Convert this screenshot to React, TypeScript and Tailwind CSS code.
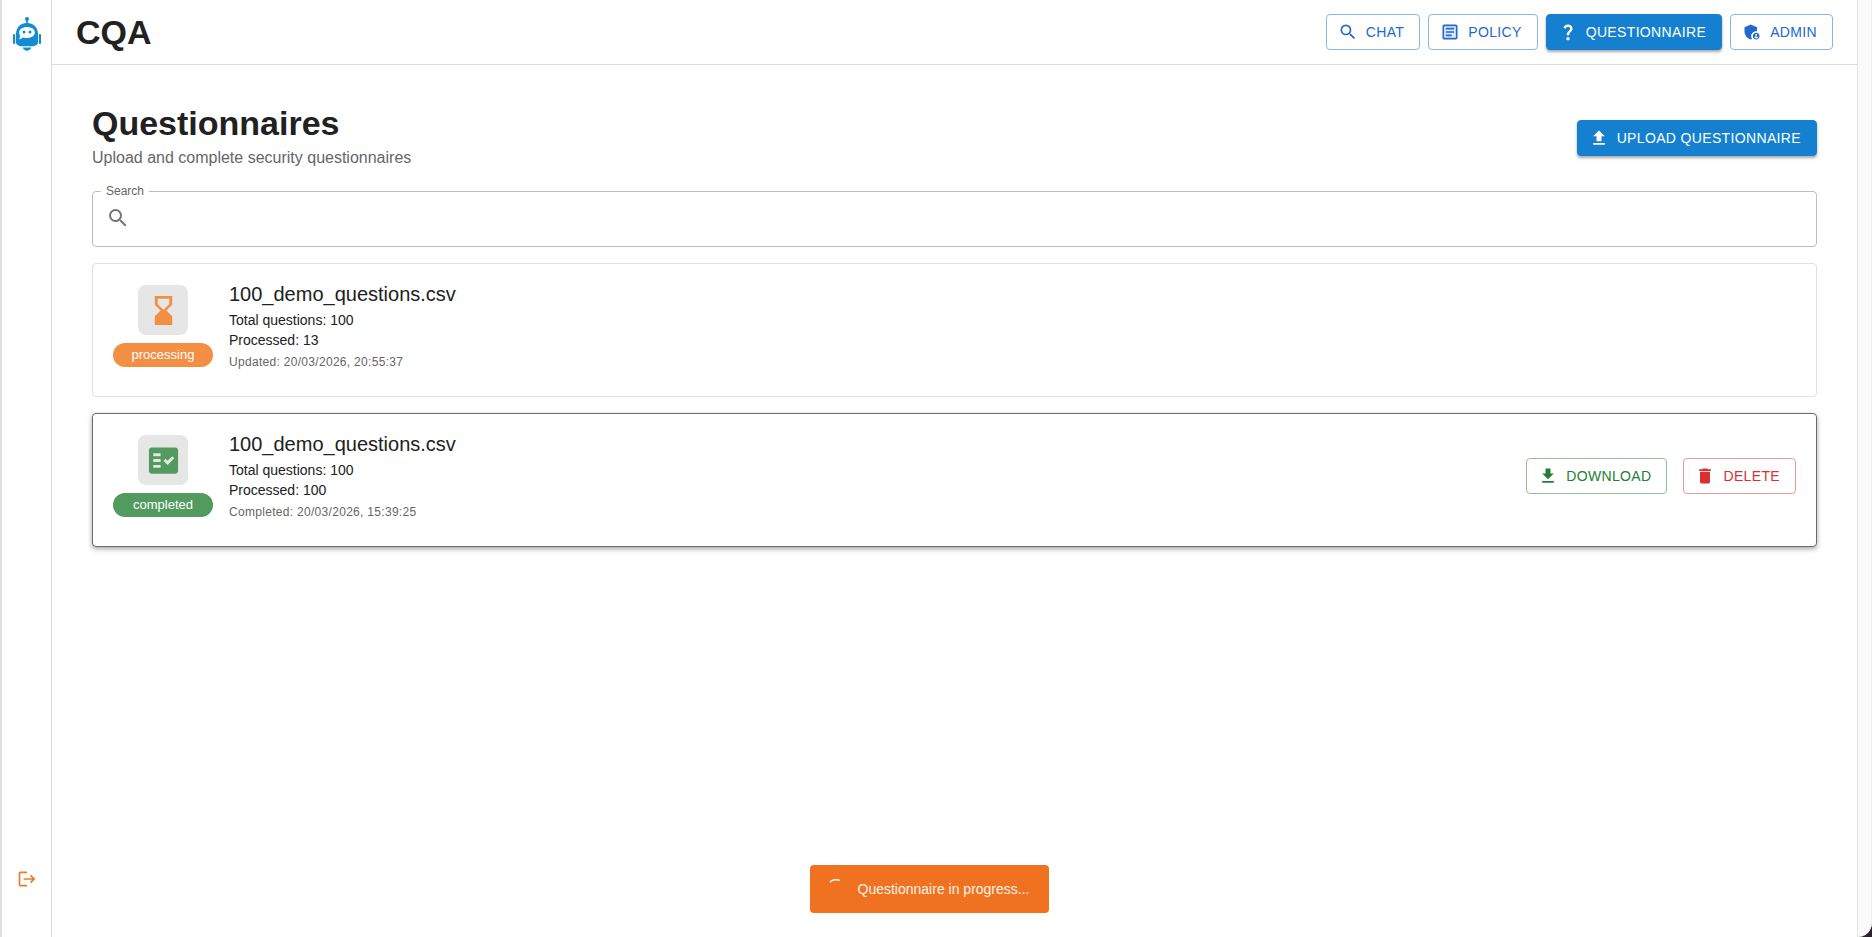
import type { ReactNode } from 'react';
import {
  MdAdminPanelSettings,
  MdDelete,
  MdDownload,
  MdFactCheck,
  MdHourglassBottom,
  MdLogout,
  MdQuestionMark,
  MdSearch,
  MdUpload,
} from 'react-icons/md';

interface Questionnaire {
  id: number;
  filename: string;
  total: number;
  processed: number;
  status: 'processing' | 'completed';
  timestamp: string;
}

const questionnaires: Questionnaire[] = [
  {
    id: 2,
    filename: '100_demo_questions.csv',
    total: 100,
    processed: 13,
    status: 'processing',
    timestamp: '20/03/2026, 20:55:37',
  },
  {
    id: 1,
    filename: '100_demo_questions.csv',
    total: 100,
    processed: 100,
    status: 'completed',
    timestamp: '20/03/2026, 15:39:25',
  },
];

const buttonVariants = {
  contained: 'bg-[#1480cf] border-[#1480cf] text-white shadow-[0_2px_3px_rgba(0,0,0,0.35)]',
  primary: 'bg-white border-[#8fb4e8] text-[#2069cf]',
  success: 'bg-white border-[#90bf99] text-[#218035]',
  error: 'bg-white border-[#ea9999] text-[#d63232]',
};

interface ButtonProps {
  variant: keyof typeof buttonVariants;
  icon: ReactNode;
  children: ReactNode;
}

function Button({ variant, icon, children }: ButtonProps) {
  return (
    <button
      type="button"
      className={`flex h-9 items-center gap-2 rounded border pl-[11px] pr-[15px] text-sm tracking-wide uppercase whitespace-nowrap cursor-pointer ${buttonVariants[variant]}`}
    >
      {icon}
      {children}
    </button>
  );
}

function ArticleIcon() {
  return (
    <svg viewBox="0 0 24 24" className="size-5" fill="currentColor">
      <path d="M5 5h14v14H5z" opacity="0.15" />
      <path d="M19 5v14H5V5h14m0-2H5c-1.100 0-2 .9-2 2v14c0 1.100.9 2 2 2h14c1.100 0 2-.9 2-2V5c0-1.100-.9-2-2-2z" />
      <path d="M14 17H7v-2h7v2zm3-4H7v-2h10v2zm0-4H7V7h10v2z" />
    </svg>
  );
}

function BotLogo() {
  return (
    <svg viewBox="0 0 30 36" className="w-[30px] h-9" aria-label="CQA">
      <g fill="#128dcf">
        <circle cx="15" cy="3" r="2" />
        <rect x="14.200" y="3" width="1.600" height="5" />
        <path d="M4 18C4 11.500 8.500 7 15 7s11 4.500 11 11v8.500c0 2-3 3.800-5.500 3.800h-11C7 30.300 4 28.500 4 26.500z" />
        <rect x="1" y="18" width="2.200" height="10" rx="1" />
        <rect x="26.800" y="18" width="2.200" height="10" rx="1" />
        <path d="M10.500 31.500h9c-.8 1.600-2.800 3.200-4.500 3.200s-3.700-1.600-4.500-3.200z" />
      </g>
      <path
        d="M15 11c4.500 0 7.800 2.300 7.800 5.500S19.500 22 15 22c-1.300 0-2.600-.2-3.700-.6L7.200 23.500l.9-3.800c-.6-.9-.9-2-.9-3.200 0-3.200 3.300-5.500 7.800-5.500z"
        fill="#fff"
      />
      <circle cx="12" cy="16" r="1.500" fill="#128dcf" />
      <circle cx="18" cy="16" r="1.500" fill="#128dcf" />
    </svg>
  );
}

function Sidebar() {
  return (
    <aside className="flex w-[50px] shrink-0 flex-col items-center justify-between border-r border-[#dcdcdc] pt-4 pb-12">
      <BotLogo />
      <button type="button" aria-label="Log out" className="cursor-pointer text-[#f07a2a]">
        <MdLogout size={20} />
      </button>
    </aside>
  );
}

function Header() {
  return (
    <header className="flex h-[65px] items-center justify-between border-b border-[#dcdcdc] px-6">
      <div className="text-[34px] leading-10 font-bold">CQA</div>
      <nav className="flex gap-2 pb-px">
        <Button variant="primary" icon={<MdSearch size={20} />}>Chat</Button>
        <Button variant="primary" icon={<ArticleIcon />}>Policy</Button>
        <Button variant="contained" icon={<MdQuestionMark size={20} />}>Questionnaire</Button>
        <Button variant="primary" icon={<MdAdminPanelSettings size={20} />}>Admin</Button>
      </nav>
    </header>
  );
}

function SearchField() {
  return (
    <fieldset className="h-[61px] rounded border border-[#bdbdbd] pl-2">
      <legend className="px-[5px] text-xs leading-[10px] text-[#666666]">
        <label htmlFor="search">Search</label>
      </legend>
      <div className="flex items-center gap-2 pt-1.5 pl-[5px]">
        <MdSearch size={24} className="text-[#757575]" />
        <input id="search" type="text" className="h-8 flex-1 bg-transparent text-base outline-none" />
      </div>
    </fieldset>
  );
}

function QuestionnaireCard({ item }: { item: Questionnaire }) {
  const completed = item.status === 'completed';

  return (
    <article
      className={`flex items-center gap-4 rounded border bg-white px-5 pt-3.5 pb-[22px] ${
        completed ? 'border-[#6b6b6b] shadow-[0_2px_5px_rgba(0,0,0,0.35)]' : 'border-[#e0e0e0]'
      }`}
    >
      <div className="flex w-[100px] flex-col items-center gap-2">
        <div
          className={`flex size-[50px] items-center justify-center rounded-lg bg-[#e6e6e6] ${
            completed ? 'text-[#529a5e]' : 'text-[#f38f43]'
          }`}
        >
          {completed ? <MdFactCheck size={35} /> : <MdHourglassBottom size={35} />}
        </div>
        <span
          className={`w-full rounded-full text-center text-[13px] leading-6 text-white ${
            completed ? 'bg-[#529a5e]' : 'bg-[#f38f43]'
          }`}
        >
          {item.status}
        </span>
      </div>

      <div className="flex-1">
        <h2 className="text-xl leading-8">{item.filename}</h2>
        <p className="text-sm leading-5">Total questions: {item.total}</p>
        <p className="text-sm leading-5">Processed: {item.processed}</p>
        <p className="text-xs leading-6 tracking-wide text-[#666666]">
          {completed ? 'Completed' : 'Updated'}: {item.timestamp}
        </p>
      </div>

      {completed && (
        <div className="flex gap-4">
          <Button variant="success" icon={<MdDownload size={20} />}>Download</Button>
          <Button variant="error" icon={<MdDelete size={20} />}>Delete</Button>
        </div>
      )}
    </article>
  );
}

function ProgressToast() {
  return (
    <div className="absolute inset-x-0 bottom-6 flex justify-center">
      <div role="status" className="flex h-12 items-center gap-3 rounded bg-[#f07221] pl-4 pr-5 text-sm text-[#fff3e6]">
        <svg viewBox="0 0 20 20" className="size-5" fill="none" stroke="currentColor" strokeWidth="1.500">
          <path d="M4 2.800A10 10 0 0 1 13.800 1.500" />
        </svg>
        <span>Questionnaire in progress...</span>
      </div>
    </div>
  );
}

export default function App() {
  return (
    <div className="min-h-screen bg-[#2b232b] font-['Liberation_Sans',Arial,sans-serif] text-[#212121]">
      <div className="flex min-h-screen rounded-br-[14px] border-r border-[#efefef] bg-[#fafafa]">
        <div className="relative flex flex-1 border-l-2 border-[#dedede] bg-white">
          <Sidebar />
          <div className="flex-1">
            <Header />
            <main className="flex flex-col gap-4 px-10 pt-[37px]">
              <div className="flex items-center justify-between">
                <div>
                  <h1 className="text-[34px] leading-[42px] font-bold">Questionnaires</h1>
                  <p className="mt-0.5 text-base leading-6 text-[#666666]">Upload and complete security questionnaires</p>
                </div>
                <div className="pt-1">
                  <Button variant="contained" icon={<MdUpload size={20} />}>Upload Questionnaire</Button>
                </div>
              </div>
              <SearchField />
              {questionnaires.map((item) => (
                <QuestionnaireCard key={item.id} item={item} />
              ))}
            </main>
          </div>
          <ProgressToast />
        </div>
        <div className="w-[14px] shrink-0 border-l border-[#e4e4e4]" />
      </div>
    </div>
  );
}
